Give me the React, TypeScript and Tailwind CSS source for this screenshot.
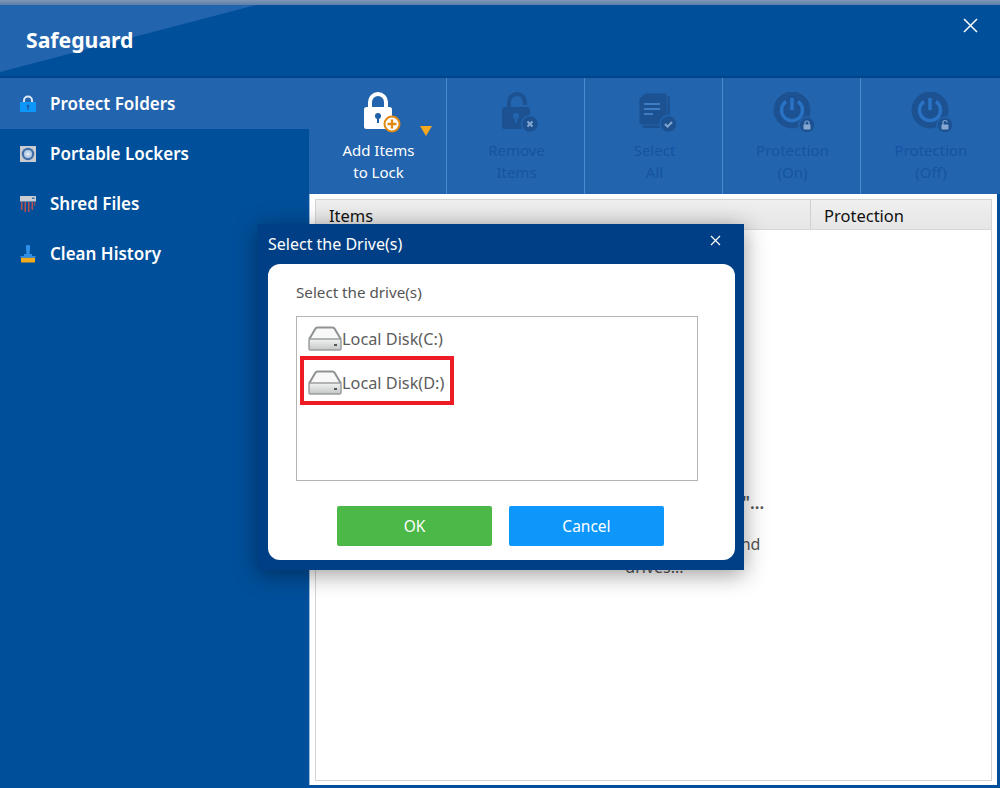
import React from "react";

const D = "#1c5292";
const L = "#86a8d0";

function LockBody({ c, keyc }: { c: string; keyc: string }) {
  return (
    <>
      <path d="M8 20v-9a10 10 0 0 1 20 0v9h-4v-9a6 6 0 0 0-12 0v9z" fill={c} />
      <rect x="4" y="16" width="28" height="22" rx="2.5" fill={c} />
      <circle cx="18" cy="25" r="3" fill={keyc} />
      <rect x="17" y="26" width="2" height="6" fill={keyc} />
    </>
  );
}

function AddLock() {
  return (
    <svg width="48" height="48" viewBox="-6 1 48 48">
      <LockBody c="#ffffff" keyc="#1d5fa8" />
      <circle cx="32" cy="33" r="7.5" fill="#ffffff" stroke="#e08a12" strokeWidth="2" />
      <path d="M32 28.5v9M27.5 33h9" stroke="#e08a12" strokeWidth="2.4" />
    </svg>
  );
}

function RemoveLock() {
  return (
    <svg width="48" height="48" viewBox="-6 1 48 48">
      <path d="M9 18v-7a10 10 0 0 1 20 0v3h-4v-3a6 6 0 0 0-12 0v7z" fill={D} />
      <rect x="4" y="16" width="28" height="22" rx="2.5" fill={D} />
      <circle cx="18" cy="25" r="3" fill="#2364ae" />
      <rect x="17" y="26" width="2" height="6" fill="#2364ae" />
      <circle cx="32" cy="33" r="8.500" fill={D} stroke="#2364ae" strokeWidth="1.500" />
      <path d="M29.500 30.500l5 5M34.500 30.500l-5 5" stroke={L} strokeWidth="2" />
    </svg>
  );
}

function Docs() {
  return (
    <svg width="48" height="48" viewBox="-3 0 48 48">
      <path d="M9 4h26a2 2 0 0 1 2 2v28a2 2 0 0 1-2 2H11a2 2 0 0 1-2-2z" fill={D} />
      <path d="M12 1h20a2 2 0 0 1 2 2v28a2 2 0 0 1-2 2H8a2 2 0 0 1-2-2V7z" fill={D} stroke="#2364ae" strokeWidth="0.8" />
      <path d="M11 12h16M11 17h16M11 22h9" stroke="#3f7cc2" strokeWidth="1.800" />
      <circle cx="35.500" cy="32" r="8.500" fill={D} stroke="#2364ae" strokeWidth="1.500" />
      <path d="M32 32l2.600 2.600 4.400-4.600" stroke={L} fill="none" strokeWidth="2" />
    </svg>
  );
}

function Power({ open }: { open?: boolean }) {
  return (
    <svg width="48" height="48" viewBox="-4 2 48 48">
      <circle cx="20" cy="20" r="18.5" fill={D} />
      <path d="M14 11.500a10.500 10.500 0 1 0 12 0" fill="none" stroke="#2a72c4" strokeWidth="3.400" />
      <path d="M20 8v12" stroke="#2a72c4" strokeWidth="3.600" />
      <circle cx="35" cy="35" r="8" fill={D} stroke="#2364ae" strokeWidth="1.500" />
      <rect x="31.500" y="34.500" width="7" height="5" rx="0.8" fill={L} />
      <path d={open ? "M33 35v-2.500a2 2 0 0 1 4 0" : "M33 35v-2a2 2 0 0 1 4 0v2"} fill="none" stroke={L} strokeWidth="1.200" />
    </svg>
  );
}

function Disk() {
  return (
    <svg width="34" height="25" viewBox="0 0 34 25" className="shrink-0">
      <defs>
        <linearGradient id="dk" x1="0" y1="0" x2="0" y2="1">
          <stop offset="0" stopColor="#f2f2f2" />
          <stop offset="1" stopColor="#c4c6c6" />
        </linearGradient>
      </defs>
      <path d="M1 13.500 7.500 2.500Q8 1.500 9.500 1.500h15Q26 1.500 26.500 2.500L33 13.500" fill="#f8f8f8" stroke="#8e9293" strokeWidth="2" />
      <rect x="1" y="13" width="32" height="11" rx="1.500" fill="url(#dk)" stroke="#9a9d9e" strokeWidth="1.500" />
      <rect x="26" y="18" width="3" height="2" fill="#555" />
    </svg>
  );
}

function SideLock() {
  return (
    <svg width="16" height="17" viewBox="0 0 16 17">
      <path d="M3 8V5.500a5 5 0 0 1 10 0V8h-2V5.500a3 3 0 0 0-6 0V8z" fill="#dfeaf5" />
      <rect y="7" width="16" height="10" fill="#0d97fb" />
      <circle cx="8" cy="11" r="1.500" fill="#1c5fa8" />
      <rect x="7.300" y="11" width="1.400" height="4" fill="#1c5fa8" />
    </svg>
  );
}

function SideLocker() {
  return (
    <svg width="16" height="16" viewBox="0 0 16 16">
      <rect width="16" height="16" fill="#c9ccd0" />
      <circle cx="8" cy="8" r="6.200" fill="#3f6ea8" />
      <circle cx="8" cy="8" r="4" fill="#b9cfe5" />
      <circle cx="8" cy="8" r="1.600" fill="#e4edf5" />
    </svg>
  );
}

function SideShred() {
  return (
    <svg width="16" height="16" viewBox="0 0 16 16">
      <rect width="16" height="5.500" y="0" rx="0.500" fill="#c9ccd0" />
      <rect x="12" y="1.500" width="2.500" height="1.500" fill="#3f6ea8" />
      <path d="M1 6h1.500v8H1zM4.500 6H6v10H4.500zM8 6h1.500v10H8zM11.500 6H13v8h-1.500zM14.300 6h1v4h-1z" fill="#b8504f" />
    </svg>
  );
}

function SideBrush() {
  return (
    <svg width="16" height="18" viewBox="0 0 16 18">
      <path d="M6 1.500a2 2 0 0 1 4 0V4l-0.500 5h2.500v2H4V9h2.500L6 4z" fill="#2d8fe6" />
      <rect x="0.500" y="11" width="15" height="1.800" fill="#2d8fe6" />
      <rect x="1" y="12.800" width="14" height="4.700" fill="#f2ab1c" />
    </svg>
  );
}

function ToolBtn({ icon, a, b, active, sep = true }: { icon: React.ReactNode; a: string; b: string; active?: boolean; sep?: boolean }) {
  return (
    <div className={`relative flex w-[138px] shrink-0 flex-col items-center pt-[14px] ${sep ? "border-r border-[#4a8bd0]" : ""}`}>
      <div className="flex h-[48px] w-[48px] items-start justify-center">{icon}</div>
      <div className={`mt-[-1px] pl-[2px] text-center text-[15px] leading-[22px] ${active ? "text-white" : "text-[#1553a3]"}`}>
        <div>{a}</div>
        <div>{b}</div>
      </div>
    </div>
  );
}

function SideItem({ icon, label, active }: { icon: React.ReactNode; label: string; active?: boolean }) {
  return (
    <div className={`flex items-center ${active ? "h-[51px] bg-[#2364ae]" : "h-[50px]"}`}>
      <div className="flex w-[50px] justify-end pr-[14px]">{icon}</div>
      <span className="text-[17px] font-semibold text-white">{label}</span>
    </div>
  );
}

export default function App() {
  return (
    <div className="relative flex h-[788px] w-[1000px] flex-col overflow-hidden bg-[#004f9a] font-['Noto_Sans','Open_Sans',sans-serif]">
      <div className="h-[5px] shrink-0 bg-gradient-to-b from-[#7f97b6] to-[#5c7ea9]" />
      <header className="relative flex h-[71px] shrink-0 items-center bg-[#004f9a] pb-[2px] pl-[26px]">
        <svg className="absolute left-0 top-0" width="256" height="68" viewBox="0 0 256 68">
          <path d="M0 0H256L0 67z" fill="#2364ae" />
        </svg>
        <h1 className="relative text-[21.200px] font-bold text-white">Safeguard</h1>
        <svg className="absolute left-[963px] top-[13px]" width="15" height="15" viewBox="0 0 15 15">
          <path d="M1 1l13 13M14 1L1 14" stroke="#fff" strokeWidth="1.500" />
        </svg>
      </header>
      <div className="h-[2px] shrink-0 bg-[#004489]" />
      <div className="flex min-h-0 flex-1">
        <aside className="w-[309px] shrink-0">
          <SideItem active icon={<SideLock />} label="Protect Folders" />
          <SideItem icon={<SideLocker />} label="Portable Lockers" />
          <SideItem icon={<SideShred />} label="Shred Files" />
          <SideItem icon={<SideBrush />} label="Clean History" />
        </aside>
        <main className="flex min-w-0 flex-1 flex-col">
          <div className="flex h-[116px] shrink-0 bg-[#2364ae]">
            <div className="relative flex">
              <ToolBtn active icon={<AddLock />} a="Add Items" b="to Lock" />
              <div className="absolute left-[111px] top-[48px] h-0 w-0 border-x-[6.500px] border-t-[10px] border-x-transparent border-t-[#f5a81c]" />
            </div>
            <ToolBtn icon={<RemoveLock />} a="Remove" b="Items" />
            <ToolBtn icon={<Docs />} a="Select" b="All" />
            <ToolBtn icon={<Power />} a="Protection" b="(On)" />
            <ToolBtn sep={false} icon={<Power open />} a="Protection" b="(Off)" />
          </div>
          <div className="mb-[3px] mr-[3px] flex min-h-0 flex-1 border-l border-[#9dbfe3] bg-white px-[5px] pb-[4px] pt-[5px]">
            <div className="flex min-w-0 flex-1 flex-col border border-[#d4d4d4]">
              <div className="flex h-[30px] shrink-0 border-b border-[#d8d8d8] bg-gradient-to-b from-[#efefef] to-[#e6e6e6] text-[16.500px] leading-[32px] text-[#111]">
                <div className="w-[495px] border-r border-[#d0d0d0] pl-[13px]">Items</div>
                <div className="pl-[13px]">Protection</div>
              </div>
              <div className="flex flex-1 flex-col items-center pt-[260px] text-center text-[#555]">
                <div className="text-[17px] font-semibold leading-[26px]">Click &quot;Add Items to Lock&quot;...</div>
                <div className="mt-[17px] w-[250px] pl-[2px] text-[16px] leading-[23px]">Select to protect folders and drives...</div>
              </div>
            </div>
          </div>
        </main>
      </div>

      <div className="absolute left-[258px] top-[224px] flex h-[346px] w-[486px] flex-col bg-[#003f85] pb-[10px] pl-[10px] pr-[9px] shadow-[0_4px_22px_rgba(0,0,0,0.4)]">
        <div className="relative flex h-[40px] shrink-0 items-center text-[16px] text-white">
          Select the Drive(s)
          <svg className="absolute right-[14px] top-[11px]" width="11" height="11" viewBox="0 0 11 11">
            <path d="M1 1l9 9M10 1l-9 9" stroke="#fff" strokeWidth="1.200" />
          </svg>
        </div>
        <div className="flex min-h-0 flex-1 flex-col rounded-[12px] bg-white pl-[28px] pr-[37px] pt-[17px]">
          <div className="h-[22px] text-[15.200px] leading-[22px] text-[#555]">Select the drive(s)</div>
          <div className="mt-[13px] h-[165px] border border-[#b3b3b3] pl-[11px] pt-[9px]">
            <div className="flex h-[25px] items-center text-[16.300px] leading-[27px] text-[#5c5c5c]">
              <Disk />
              <span className="pt-[2px]">Local Disk(C:)</span>
            </div>
            <div className="relative mt-[19px] flex h-[25px] items-center text-[16.300px] leading-[27px] text-[#5c5c5c]">
              <Disk />
              <span className="pt-[2px]">Local Disk(D:)</span>
              <div className="absolute left-[-8px] top-[-14px] h-[49px] w-[154px] border-[4px] border-[#ed1c24]" />
            </div>
          </div>
          <div className="ml-[41px] mt-[25px] flex gap-[17px] text-[15.500px] text-white">
            <div className="flex h-[40px] w-[155px] items-center justify-center rounded-[2px] bg-[#4cb848] pt-[2px]">OK</div>
            <div className="flex h-[40px] w-[155px] items-center justify-center rounded-[2px] bg-[#0d97fb] pt-[2px]">Cancel</div>
          </div>
        </div>
      </div>
    </div>
  );
}
